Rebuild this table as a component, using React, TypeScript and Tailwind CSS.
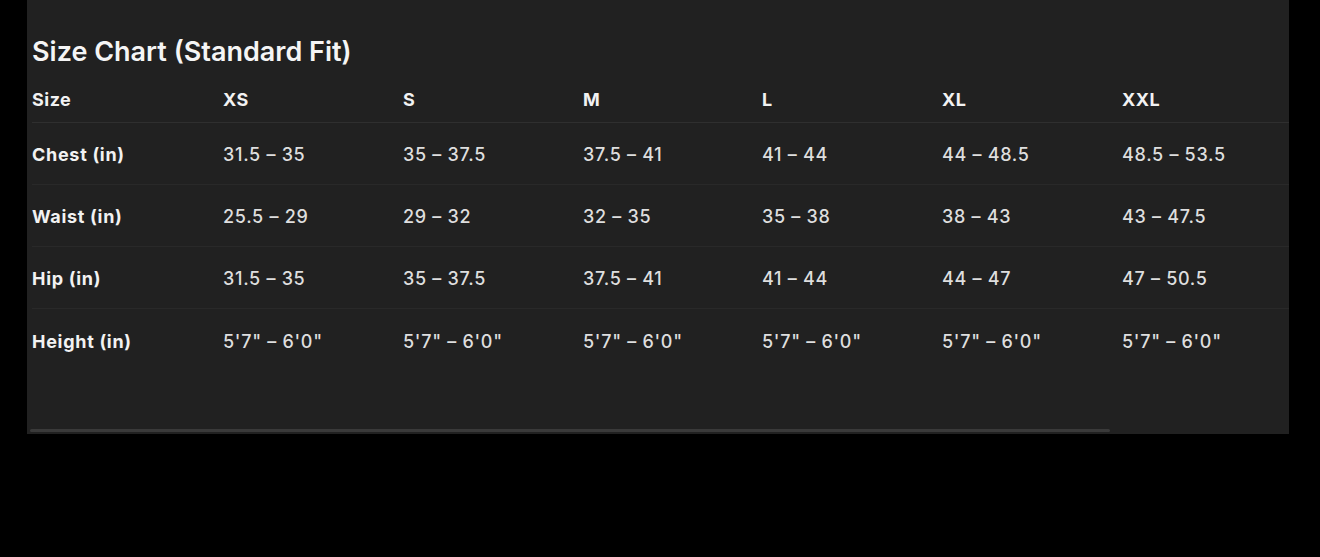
import React from "react";

const sizes = ["XS", "S", "M", "L", "XL", "XXL"];
const rows: { label: string; values: string[] }[] = [
  { label: "Chest (in)", values: ["31.5 – 35", "35 – 37.5", "37.5 – 41", "41 – 44", "44 – 48.5", "48.5 – 53.5"] },
  { label: "Waist (in)", values: ["25.5 – 29", "29 – 32", "32 – 35", "35 – 38", "38 – 43", "43 – 47.5"] },
  { label: "Hip (in)", values: ["31.5 – 35", "35 – 37.5", "37.5 – 41", "41 – 44", "44 – 47", "47 – 50.5"] },
  { label: "Height (in)", values: ["5'7\" – 6'0\"", "5'7\" – 6'0\"", "5'7\" – 6'0\"", "5'7\" – 6'0\"", "5'7\" – 6'0\"", "5'7\" – 6'0\""] },
];

const gridCols = "grid grid-cols-[191px_180px_180px_179px_180px_180px_1fr]";

export default function App() {
  return (
    <div className="w-[1320px] h-[557px] bg-black" style={{ fontFamily: "Inter, 'Noto Sans', sans-serif" }}>
      <div className="ml-[27px] w-[1262px] h-[434px] bg-[#212121] flex flex-col">
        <div className="pl-[5px] pt-[36px] h-[76px] text-[27px] leading-[32px] font-semibold text-[#f5f5f5]">
          Size Chart (Standard Fit)
        </div>
        <div className="ml-[5px]">
          <div className={`${gridCols} h-[47px] items-center border-b border-[#2f2f2f] text-[18px] tracking-[0.5px] font-bold text-[#f2f2f2]`}>
            <div>Size</div>
            {sizes.map((s) => (
              <div key={s}>{s}</div>
            ))}
          </div>
          {rows.map((r, i) => (
            <div
              key={r.label}
              className={`${gridCols} h-[62px] pt-[2px] items-center text-[18px] tracking-[0.7px] ${i < rows.length - 1 ? "border-b border-[#292929]" : ""}`}
            >
              <div className="font-bold text-[#f2f2f2]">{r.label}</div>
              {r.values.map((v, j) => (
                <div key={j} className="font-medium text-[#dedede]">
                  {v}
                </div>
              ))}
            </div>
          ))}
        </div>
        <div className="flex-1" />
        <div className="ml-[3px] mb-[2px] w-[1080px] h-[3px] bg-[#3a3a3a] rounded-full" />
      </div>
    </div>
  );
}
